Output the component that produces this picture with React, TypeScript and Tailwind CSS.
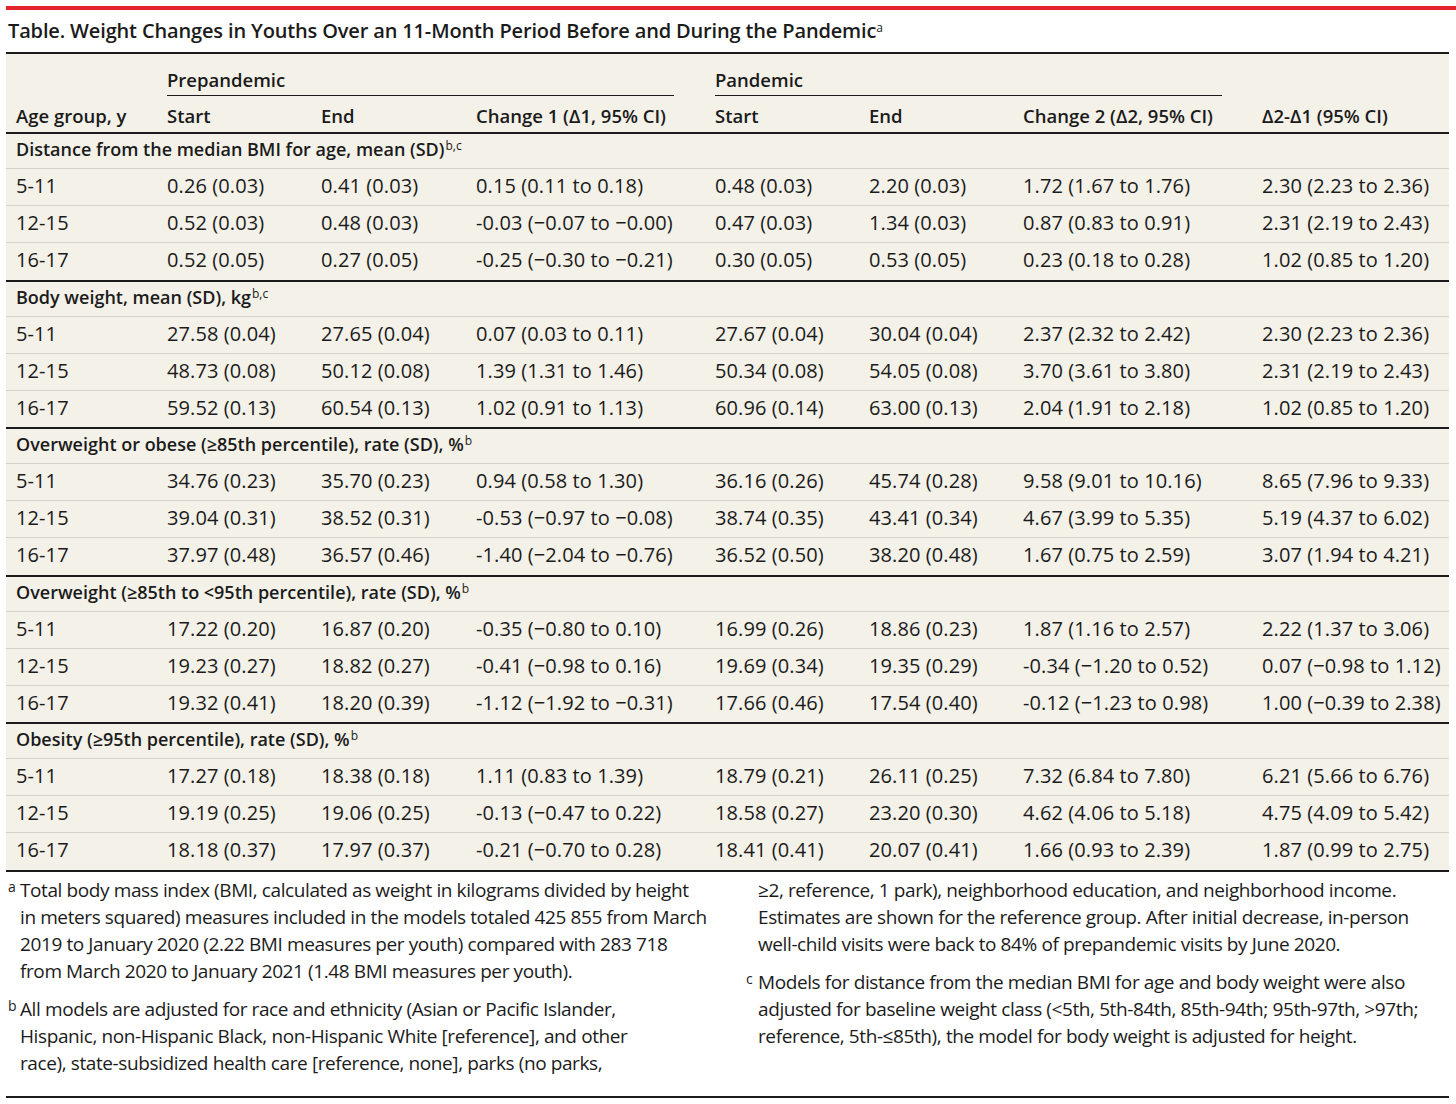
import React from 'react';

type Section = {
    title: string;
    sup: string;
    rows: string[][];
};

const M = '\u2212';

const SECTIONS: Section[] = [
    {
        title: 'Distance from the median BMI for age, mean (SD)',
        sup: 'b,c',
        rows: [
            ['5-11', '0.26 (0.03)', '0.41 (0.03)', '0.15 (0.11 to 0.18)', '0.48 (0.03)', '2.20 (0.03)', '1.72 (1.67 to 1.76)', '2.30 (2.23 to 2.36)'],
            ['12-15', '0.52 (0.03)', '0.48 (0.03)', `-0.03 (${M}0.07 to ${M}0.00)`, '0.47 (0.03)', '1.34 (0.03)', '0.87 (0.83 to 0.91)', '2.31 (2.19 to 2.43)'],
            ['16-17', '0.52 (0.05)', '0.27 (0.05)', `-0.25 (${M}0.30 to ${M}0.21)`, '0.30 (0.05)', '0.53 (0.05)', '0.23 (0.18 to 0.28)', '1.02 (0.85 to 1.20)'],
        ],
    },
    {
        title: 'Body weight, mean (SD), kg',
        sup: 'b,c',
        rows: [
            ['5-11', '27.58 (0.04)', '27.65 (0.04)', '0.07 (0.03 to 0.11)', '27.67 (0.04)', '30.04 (0.04)', '2.37 (2.32 to 2.42)', '2.30 (2.23 to 2.36)'],
            ['12-15', '48.73 (0.08)', '50.12 (0.08)', '1.39 (1.31 to 1.46)', '50.34 (0.08)', '54.05 (0.08)', '3.70 (3.61 to 3.80)', '2.31 (2.19 to 2.43)'],
            ['16-17', '59.52 (0.13)', '60.54 (0.13)', '1.02 (0.91 to 1.13)', '60.96 (0.14)', '63.00 (0.13)', '2.04 (1.91 to 2.18)', '1.02 (0.85 to 1.20)'],
        ],
    },
    {
        title: 'Overweight or obese (\u226585th percentile), rate (SD), %',
        sup: 'b',
        rows: [
            ['5-11', '34.76 (0.23)', '35.70 (0.23)', '0.94 (0.58 to 1.30)', '36.16 (0.26)', '45.74 (0.28)', '9.58 (9.01 to 10.16)', '8.65 (7.96 to 9.33)'],
            ['12-15', '39.04 (0.31)', '38.52 (0.31)', `-0.53 (${M}0.97 to ${M}0.08)`, '38.74 (0.35)', '43.41 (0.34)', '4.67 (3.99 to 5.35)', '5.19 (4.37 to 6.02)'],
            ['16-17', '37.97 (0.48)', '36.57 (0.46)', `-1.40 (${M}2.04 to ${M}0.76)`, '36.52 (0.50)', '38.20 (0.48)', '1.67 (0.75 to 2.59)', '3.07 (1.94 to 4.21)'],
        ],
    },
    {
        title: 'Overweight (\u226585th to <95th percentile), rate (SD), %',
        sup: 'b',
        rows: [
            ['5-11', '17.22 (0.20)', '16.87 (0.20)', `-0.35 (${M}0.80 to 0.10)`, '16.99 (0.26)', '18.86 (0.23)', '1.87 (1.16 to 2.57)', '2.22 (1.37 to 3.06)'],
            ['12-15', '19.23 (0.27)', '18.82 (0.27)', `-0.41 (${M}0.98 to 0.16)`, '19.69 (0.34)', '19.35 (0.29)', `-0.34 (${M}1.20 to 0.52)`, `0.07 (${M}0.98 to 1.12)`],
            ['16-17', '19.32 (0.41)', '18.20 (0.39)', `-1.12 (${M}1.92 to ${M}0.31)`, '17.66 (0.46)', '17.54 (0.40)', `-0.12 (${M}1.23 to 0.98)`, `1.00 (${M}0.39 to 2.38)`],
        ],
    },
    {
        title: 'Obesity (\u226595th percentile), rate (SD), %',
        sup: 'b',
        rows: [
            ['5-11', '17.27 (0.18)', '18.38 (0.18)', '1.11 (0.83 to 1.39)', '18.79 (0.21)', '26.11 (0.25)', '7.32 (6.84 to 7.80)', '6.21 (5.66 to 6.76)'],
            ['12-15', '19.19 (0.25)', '19.06 (0.25)', `-0.13 (${M}0.47 to 0.22)`, '18.58 (0.27)', '23.20 (0.30)', '4.62 (4.06 to 5.18)', '4.75 (4.09 to 5.42)'],
            ['16-17', '18.18 (0.37)', '17.97 (0.37)', `-0.21 (${M}0.70 to 0.28)`, '18.41 (0.41)', '20.07 (0.41)', '1.66 (0.93 to 2.39)', '1.87 (0.99 to 2.75)'],
        ],
    },
];

const GRID = 'grid grid-cols-[151px_154px_155px_239px_154px_154px_239px_1fr] pl-[10px]';

const Note = ({ mark, lines, className = '' }: { mark: string; lines: string[]; className?: string }) => (
    <div className={`flex ${className}`}>
        <span className="w-[12px] shrink-0 text-[14px] tracking-normal leading-[20px]">{mark}</span>
        <div>
            {lines.map((l, i) => (
                <div key={i} className="whitespace-nowrap leading-[27px]">{l}</div>
            ))}
        </div>
    </div>
);

export default function App(): JSX.Element {
    return (
        <div className="w-[1456px] h-[1104px] bg-white text-[#1b1b1b] font-['Open_Sans',sans-serif] overflow-hidden">
            <div className="ml-[6px] mt-[6px] h-[4px] bg-[#e3242b]" />

            <div className="ml-[6px] w-[1443px] h-[44px] pl-[2px] flex items-center border-b-2 border-[#1b1b1b]">
                <h1 className="text-[20px] font-semibold tracking-[-0.15px]">
                    Table. Weight Changes in Youths Over an 11-Month Period Before and During the Pandemic
                    <sup className="text-[12px] font-normal">a</sup>
                </h1>
            </div>

            <div className="ml-[6px] w-[1443px] bg-[#f3f1e8] text-[20px]">
                {/* header */}
                <div className="border-b-2 border-[#1b1b1b] font-semibold text-[18.5px]">
                    <div className={GRID}>
                        <div />
                        <div className="col-span-3 mr-[41px] pt-[14px] pb-[3px] leading-[24px] border-b-[1.5px] border-[#1b1b1b]">Prepandemic</div>
                        <div className="col-span-3 mr-[40px] pt-[14px] pb-[3px] leading-[24px] border-b-[1.5px] border-[#1b1b1b]">Pandemic</div>
                        <div />
                    </div>
                    <div className={`${GRID} pt-[8px] pb-[4px] leading-[24px]`}>
                        <div>Age group, y</div>
                        <div>Start</div>
                        <div>End</div>
                        <div>Change 1 ({'\u0394'}1, 95% CI)</div>
                        <div>Start</div>
                        <div>End</div>
                        <div>Change 2 ({'\u0394'}2, 95% CI)</div>
                        <div>{'\u0394'}2-{'\u0394'}1 (95% CI)</div>
                    </div>
                </div>

                {SECTIONS.map((s) => (
                    <div key={s.title} className="border-b-2 border-[#1b1b1b]">
                        <div className="h-[35px] pl-[10px] pt-[3px] leading-[24px] font-semibold text-[18px] border-b border-[#d4d1c6]">
                            {s.title}
                            <sup className="text-[12px] font-normal ml-[1px]">{s.sup}</sup>
                        </div>
                        {s.rows.map((r, i) => (
                            <div
                                key={i}
                                className={`${GRID} items-center pb-[2px] ${i < s.rows.length - 1 ? 'h-[37px] border-b border-[#d4d1c6]' : 'h-[36.5px]'}`}
                            >
                                {r.map((c, j) => (
                                    <div key={j} className="whitespace-nowrap tracking-[0.1px]">{c}</div>
                                ))}
                            </div>
                        ))}
                    </div>
                ))}
            </div>

            <div className="ml-[8px] w-[1441px] pt-[5px] text-[19px] font-['Open_Sans',sans-serif] tracking-[-0.4px] flex">
                <div className="w-[738px] shrink-0">
                    <Note
                        mark="a"
                        lines={[
                            'Total body mass index (BMI, calculated as weight in kilograms divided by height',
                            'in meters squared) measures included in the models totaled 425 855 from March',
                            '2019 to January 2020 (2.22 BMI measures per youth) compared with 283 718',
                            'from March 2020 to January 2021 (1.48 BMI measures per youth).',
                        ]}
                    />
                    <Note
                        className="mt-[11px]"
                        mark="b"
                        lines={[
                            'All models are adjusted for race and ethnicity (Asian or Pacific Islander,',
                            'Hispanic, non-Hispanic Black, non-Hispanic White [reference], and other',
                            'race), state-subsidized health care [reference, none], parks (no parks,',
                        ]}
                    />
                </div>
                <div>
                    <Note
                        mark=""
                        lines={[
                            '\u22652, reference, 1 park), neighborhood education, and neighborhood income.',
                            'Estimates are shown for the reference group. After initial decrease, in-person',
                            'well-child visits were back to 84% of prepandemic visits by June 2020.',
                        ]}
                    />
                    <Note
                        className="mt-[11px]"
                        mark="c"
                        lines={[
                            'Models for distance from the median BMI for age and body weight were also',
                            'adjusted for baseline weight class (<5th, 5th-84th, 85th-94th; 95th-97th, >97th;',
                            'reference, 5th-\u226485th), the model for body weight is adjusted for height.',
                        ]}
                    />
                </div>
            </div>

            <div className="ml-[6px] mt-[19px] w-[1443px] border-b-2 border-[#1b1b1b]" />
        </div>
    );
}
